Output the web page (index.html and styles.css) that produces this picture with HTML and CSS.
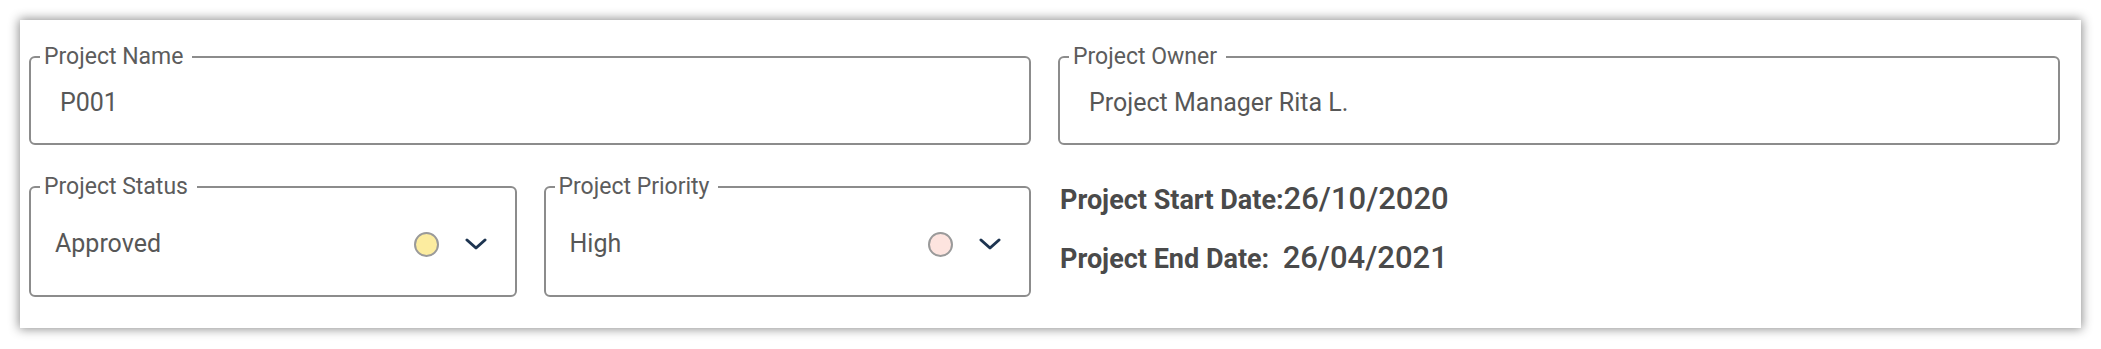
FILE: index.html
```html
<!DOCTYPE html>
<html lang="en">
<head>
    <meta charset="UTF-8">
    <meta name="viewport" content="width=device-width, initial-scale=1.0">
    <title>Project Details</title>
    <link rel="stylesheet" href="styles.css">
</head>
<body>

    <!-- Project Details Card -->
    <div class="card">
        <div class="form-grid">
            <fieldset class="field wide">
                <legend>Project Name</legend>
                <div class="field-value">P001</div>
            </fieldset>

            <fieldset class="field wide">
                <legend>Project Owner</legend>
                <div class="field-value">Project Manager Rita L.</div>
            </fieldset>

            <fieldset class="field">
                <legend>Project Status</legend>
                <div class="select-value">
                    <span class="select-text">Approved</span>
                    <span class="dot dot-yellow"></span>
                    <svg class="chevron" viewBox="0 0 22 12" width="22" height="12">
                        <polyline points="2,2 11,10 20,2" />
                    </svg>
                </div>
            </fieldset>

            <fieldset class="field">
                <legend>Project Priority</legend>
                <div class="select-value">
                    <span class="select-text">High</span>
                    <span class="dot dot-pink"></span>
                    <svg class="chevron" viewBox="0 0 22 12" width="22" height="12">
                        <polyline points="2,2 11,10 20,2" />
                    </svg>
                </div>
            </fieldset>

            <div class="dates">
                <div class="date-row">
                    <span class="date-label">Project Start Date:</span><span class="date-value">26/10/2020</span>
                </div>
                <div class="date-row">
                    <span class="date-label">Project End Date:&nbsp;&nbsp;</span><span class="date-value">26/04/2021</span>
                </div>
            </div>
        </div>
    </div>

</body>
</html>
```

FILE: styles.css
```css
/* Reset and Global Styles */
* {
    margin: 0;
    padding: 0;
    box-sizing: border-box;
    font-family: Roboto, "Liberation Sans", Arial, sans-serif;
}

body {
    background-color: #ffffff;
    padding: 20px;
}

/* Card */
.card {
    width: 2061px;
    background-color: #fff;
    box-shadow: 0 0 10px 1px rgba(0, 0, 0, 0.45);
}

.form-grid {
    display: grid;
    grid-template-columns: repeat(4, 1fr);
    column-gap: 27px;
    row-gap: 29px;
    padding: 24px 21px 31px 9px;
}

/* Outlined fields */
.field {
    border: 2px solid #8c8c8c;
    border-radius: 6px;
    padding: 0 9px;
    min-width: 0;
}

.field.wide {
    grid-column: span 2;
}

.field legend {
    padding: 0 9px 0 4px;
    font-size: 23px;
    line-height: 26px;
    color: #5c5c5c;
}

.field-value {
    padding: 19px 0 26px 20px;
    font-size: 25px;
    line-height: 28px;
    color: #575757;
}

/* Select style fields */
.select-value {
    display: flex;
    align-items: center;
    padding: 30px 19px 37px 15px;
    font-size: 25px;
    line-height: 28px;
    color: #575757;
}

.select-text {
    flex: 1;
}

.dot {
    width: 25px;
    height: 25px;
    border-radius: 50%;
    border: 2.5px solid #9a9a9a;
}

.dot-yellow {
    background-color: #fcec9f;
}

.dot-pink {
    background-color: #fde4df;
}

.chevron {
    margin-left: 26px;
    fill: none;
    stroke: #1d3450;
    stroke-width: 3;
    stroke-linecap: round;
    stroke-linejoin: round;
}

/* Dates */
.dates {
    grid-column: span 2;
    padding: 5px 0 0 2px;
    display: flex;
    flex-direction: column;
    gap: 18px;
    color: #4a4a4a;
}

.date-row {
    font-size: 27px;
    line-height: 40px;
}

.date-label {
    font-weight: 700;
}

.date-value {
    font-size: 31px;
    font-weight: 500;
}
```
